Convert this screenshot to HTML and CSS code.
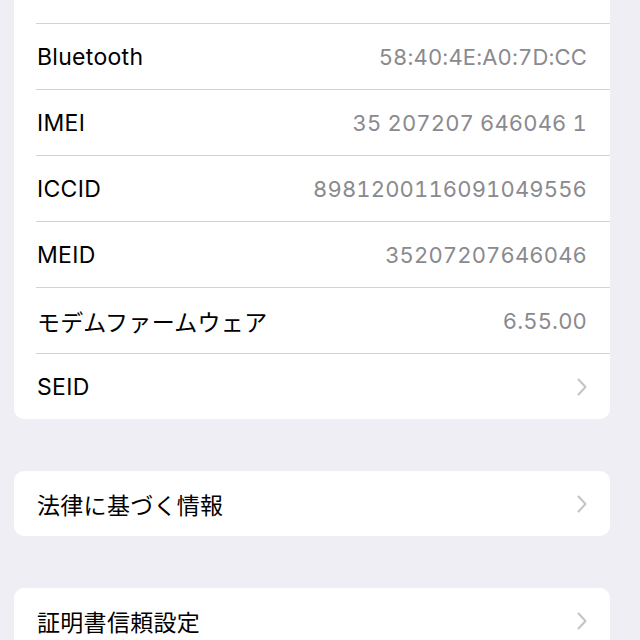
FILE: index.html
```html
<!DOCTYPE html>
<html lang="ja">
<head>
<meta charset="UTF-8">
<meta name="viewport" content="width=device-width, initial-scale=1.0">
<title>情報</title>
<link rel="stylesheet" href="styles.css">
</head>
<body>

<div class="page">
    <div class="group group-top">
        <div class="row row-cut"></div>
        <div class="row"><span class="label">Bluetooth</span><span class="value">58:40:4E:A0:7D:CC</span></div>
        <div class="row"><span class="label">IMEI</span><span class="value">35 207207 646046 1</span></div>
        <div class="row"><span class="label">ICCID</span><span class="value">8981200116091049556</span></div>
        <div class="row"><span class="label">MEID</span><span class="value">35207207646046</span></div>
        <div class="row"><span class="label">モデムファームウェア</span><span class="value">6.55.00</span></div>
        <div class="row"><span class="label">SEID</span>
            <svg class="chevron" width="10" height="18" viewBox="0 0 10 18"><polyline points="1.5,1.5 8.5,9 1.5,16.5"/></svg>
        </div>
    </div>

    <div class="group">
        <div class="row"><span class="label">法律に基づく情報</span>
            <svg class="chevron" width="10" height="18" viewBox="0 0 10 18"><polyline points="1.5,1.5 8.5,9 1.5,16.5"/></svg>
        </div>
    </div>

    <div class="group">
        <div class="row"><span class="label">証明書信頼設定</span>
            <svg class="chevron" width="10" height="18" viewBox="0 0 10 18"><polyline points="1.5,1.5 8.5,9 1.5,16.5"/></svg>
        </div>
    </div>
</div>

</body>
</html>
```

FILE: styles.css
```css
body {
    margin: 0;
    background-color: #efeef4;
    font-family: Inter, "Noto Sans CJK JP", sans-serif;
    color: #000;
    overflow: hidden;
}
.page {
    padding: 0 30px 0 14px;
}
.group {
    background-color: #fff;
    border-radius: 10px;
    margin-bottom: 52px;
}
.group-top {
    border-radius: 0 0 10px 10px;
}
.row {
    display: flex;
    align-items: center;
    justify-content: space-between;
    height: 65px;
    padding: 0 23px;
    position: relative;
}
.row-cut {
    height: 23px;
}
.row + .row {
    margin-top: 1px;
}
.row + .row::before {
    content: "";
    position: absolute;
    top: -1px;
    left: 22px;
    right: 0;
    height: 1px;
    background-color: #d3d2d7;
}
.label {
    font-size: 23px;
    letter-spacing: 0.3px;
}
.value {
    font-size: 22px;
    letter-spacing: 0.15px;
    color: #8a8a8e;
    font-variant-numeric: tabular-nums;
}
.chevron {
    fill: none;
    stroke: #c4c4c7;
    stroke-width: 2;
    stroke-linecap: round;
    stroke-linejoin: round;
}
```
